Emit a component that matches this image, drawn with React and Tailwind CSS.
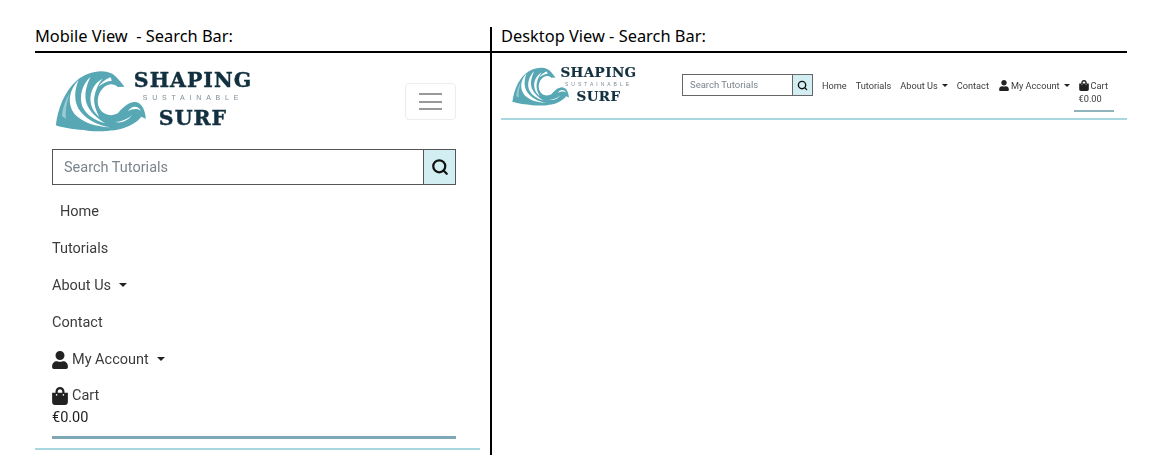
import { FaUser, FaShoppingBag } from 'react-icons/fa'
import { Search } from 'lucide-react'

function Wave({ className }) {
  return (
    <svg viewBox="10 12 272 186" className={className}>
      <path
        fill="#57a7b5"
        d="M12 178C18 130 36 78 74 44C104 18 150 8 178 22C194 30 204 46 218 62L198 63C186 52 168 52 154 66C136 84 132 112 146 132C158 148 180 152 198 142C212 126 228 108 250 108C272 110 280 136 282 158L268 152C262 162 246 174 226 182C200 194 150 198 108 194C74 190 40 188 12 178Z"
      />
      <g fill="#fff">
        <path d="M80 42C52 72 44 112 68 144C90 168 128 182 176 184C136 178 98 158 80 128C66 102 68 72 80 42Z" />
        <path d="M116 32C92 54 80 90 92 122C104 146 126 162 160 172C134 156 114 138 104 112C96 84 104 58 116 32Z" />
        <path d="M152 38C128 50 114 76 116 104C118 126 128 140 142 152C132 132 124 112 128 90C132 70 140 52 152 38Z" />
        <path d="M176 34C160 40 148 50 140 62C150 54 162 46 180 44Z" />
        <path d="M228 136C238 120 256 116 268 134C256 126 242 128 228 136Z" />
        <path d="M190 168C208 168 226 160 240 148C232 160 212 174 190 168Z" />
        <path d="M30 150C34 120 42 100 52 84C46 108 40 130 42 158Z" opacity="0.4" />
      </g>
    </svg>
  )
}

function Logo({ small }) {
  if (small) {
    return (
      <div className="flex items-start w-[124px] h-[38px] shrink-0">
        <Wave className="w-[57px] h-[39px] shrink-0" />
        <div className="-ml-[8px] w-[75px] flex flex-col items-center text-[#12303f] font-['DejaVu_Serif',serif] font-bold [-webkit-text-stroke:0.2px_#12303f]">
          <span className="text-[13.5px] leading-[13px] tracking-[0.4px] -mt-[1px]">SHAPING</span>
          <span className="text-[5px] leading-[5px] mt-[3px] tracking-[3px] text-[#7d8c94] font-['Liberation_Sans',sans-serif] font-normal [-webkit-text-stroke:0]">SUSTAINABLE</span>
          <span className="text-[13.5px] leading-[13px] mt-[3px] tracking-[0.4px]">SURF</span>
        </div>
      </div>
    )
  }
  return (
    <div className="flex items-start w-[196px] h-[62px] shrink-0">
      <Wave className="w-[91px] h-[62px] shrink-0" />
      <div className="-ml-[12px] w-[118px] flex flex-col items-center text-[#12303f] font-['DejaVu_Serif',serif] font-bold [-webkit-text-stroke:0.4px_#12303f]">
        <span className="text-[20.5px] leading-[21px] tracking-[1px]">SHAPING</span>
        <span className="text-[7px] leading-[8px] mt-[3px] tracking-[4.8px] text-[#7d8c94] font-['Liberation_Sans',sans-serif] font-normal [-webkit-text-stroke:0]">SUSTAINABLE</span>
        <span className="text-[20.5px] leading-[21px] mt-[6px] tracking-[1px]">SURF</span>
      </div>
    </div>
  )
}

function Caret({ small }) {
  return small ? (
    <span className="ml-[4px] w-0 h-0 border-x-[3px] border-x-transparent border-t-[3px] border-t-[#222]" />
  ) : (
    <span className="ml-[8px] -mt-[2px] w-0 h-0 border-x-[4.5px] border-x-transparent border-t-[4.5px] border-t-[#222]" />
  )
}

function MobileView() {
  return (
    <div className="w-[445px]">
      <div className="flex items-center justify-between h-[96px] pl-[20px] pr-[24px]">
        <Logo />
        <div className="w-[51px] h-[37px] mt-[1px] border border-[#ececec] rounded-[4px] flex flex-col items-center justify-center gap-[5.5px]">
          <span className="w-[23px] h-[2px] bg-[#999]" />
          <span className="w-[23px] h-[2px] bg-[#999]" />
          <span className="w-[23px] h-[2px] bg-[#999]" />
        </div>
      </div>
      <div className="ml-[17px] w-[404px] h-[36px] flex border-[1.5px] border-[#555]">
        <div className="flex-1 flex items-center pl-[11px] pt-[2px] text-[#7b848c] text-[14.5px]">Search Tutorials</div>
        <div className="w-[32px] bg-[#d3eef2] border-l-[1.5px] border-[#555] flex items-center justify-center">
          <Search className="w-[18px] h-[18px] text-[#111]" strokeWidth={3} />
        </div>
      </div>
      <div className="pl-[17px] pt-[8px] text-[14.5px] text-[#3c3c3c]">
        <div className="h-[37px] flex items-center pl-[8px]">Home</div>
        <div className="h-[37px] flex items-center">Tutorials</div>
        <div className="h-[37px] flex items-center">About Us<Caret /></div>
        <div className="h-[37px] flex items-center">Contact</div>
        <div className="h-[37px] flex items-center">
          <FaUser className="w-[16px] h-[18px] text-[#222] mr-[4px]" />
          My Account<Caret />
        </div>
        <div className="h-[36px] flex items-center">
          <FaShoppingBag className="w-[16px] h-[18px] text-[#222] mr-[4px]" />
          Cart
        </div>
        <div className="leading-[18px] -mt-[5px] text-[#222]">€0.00</div>
      </div>
      <div className="ml-[17px] w-[404px] h-[3px] mt-[9px] bg-[#7fa6b3]" />
      <div className="h-[2px] mt-[9px] bg-[#a9d8e0]" />
    </div>
  )
}

function DesktopView() {
  return (
    <div className="flex-1">
      <div className="flex items-start h-[67px] border-b-2 border-[#a9d8e0]">
        <div className="pl-[11px] pt-[14px] w-[181px]">
          <Logo small />
        </div>
        <div className="mt-[21px] w-[131px] h-[22px] flex border border-[#666]">
          <div className="flex-1 flex items-center pl-[7px] text-[#7b848c] text-[9.5px]">Search Tutorials</div>
          <div className="w-[20px] bg-[#d3eef2] border-l border-[#666] flex items-center justify-center">
            <Search className="w-[11px] h-[11px] text-[#111]" strokeWidth={3} />
          </div>
        </div>
        <div className="ml-[9px] mt-[26px] flex items-start text-[9.2px] leading-[13px] text-[#3c3c3c]">
          <span className="mr-[9px]">Home</span>
          <span className="mr-[9px]">Tutorials</span>
          <span className="flex items-center mr-[9px]">About Us<Caret small /></span>
          <span className="mr-[10px]">Contact</span>
          <span className="flex items-center mr-[9px]">
            <FaUser className="w-[10px] h-[11px] text-[#222] mr-[2px]" />
            My Account<Caret small />
          </span>
          <div className="w-[40px] -ml-[5px] pl-[5px] h-[34px] border-b-2 border-[#8fb2bd] -mt-[1px]">
            <div className="flex items-center h-[14px]">
              <FaShoppingBag className="w-[10px] h-[11px] text-[#222] mr-[2px]" />
              Cart
            </div>
            <div>€0.00</div>
          </div>
        </div>
      </div>
    </div>
  )
}

export default function App() {
  return (
    <div className="w-[1150px] h-[455px] overflow-hidden bg-white pt-[27px] pl-[35px] font-['Roboto',sans-serif]">
      <div className="flex w-[1092px] h-[428px]">
        <div className="w-[455px]">
          <div className="h-[26px] border-b-2 border-black text-[16.4px] leading-[18px] text-black font-['Noto_Sans',sans-serif] whitespace-pre">Mobile View  - Search Bar:</div>
          <div className="blur-[0.3px]">
            <MobileView />
          </div>
        </div>
        <div className="flex-1 border-l-2 border-black">
          <div className="h-[26px] border-b-2 border-black pl-[9px] text-[16.4px] leading-[18px] text-black font-['Noto_Sans',sans-serif]">Desktop View - Search Bar:</div>
          <div className="pl-[9px] blur-[0.3px]">
            <DesktopView />
          </div>
        </div>
      </div>
    </div>
  )
}
